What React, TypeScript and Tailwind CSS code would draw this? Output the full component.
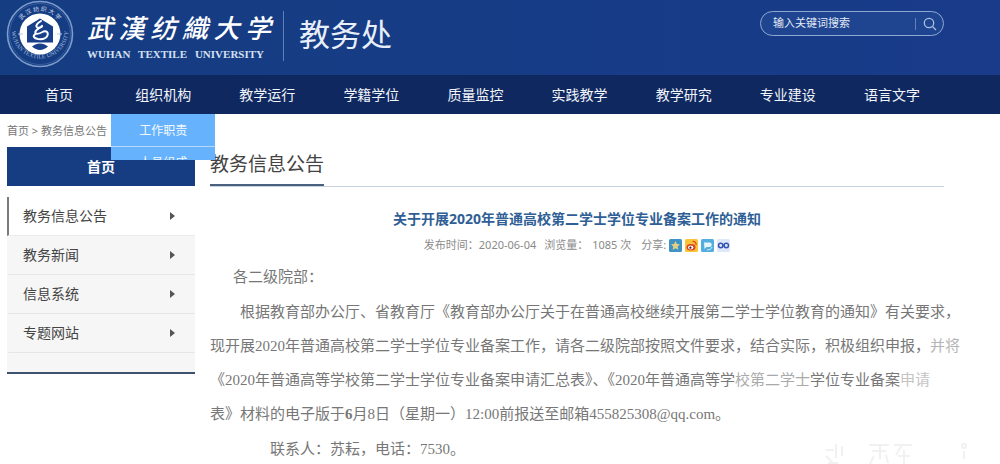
import React from "react";

const navItems = ["首页", "组织机构", "教学运行", "学籍学位", "质量监控", "实践教学", "教学研究", "专业建设", "语言文字"];
const sideItems = ["教务信息公告", "教务新闻", "信息系统", "专题网站"];

function Emblem() {
  return (
    <svg viewBox="0 0 68 68" className="h-[68px] w-[68px] shrink-0" aria-hidden="true">
      <defs>
        <path id="ringTop" d="M11 34a23 23 0 0 1 46 0" />
        <path id="ringBottom" d="M5.500 30a28.500 28.500 0 1 0 57 0" />
      </defs>
      <circle cx="34" cy="34" r="32.500" fill="none" stroke="#7f9dcc" strokeWidth="1.600" />
      <circle cx="34" cy="34" r="30.500" fill="none" stroke="#3d63a6" strokeWidth="0.800" />
      <text fill="#c9d7ee" fontSize="6" fontFamily="'Noto Sans CJK SC', sans-serif" textAnchor="middle">
        <textPath href="#ringTop" startOffset="50%">武 汉 纺 织 大 学</textPath>
      </text>
      <text fill="#9fb7de" fontSize="6" fontFamily="'Liberation Serif', serif" textAnchor="middle">
        <textPath href="#ringBottom" startOffset="50%">WUHAN TEXTILE UNIVERSITY</textPath>
      </text>
      <circle cx="34" cy="34" r="20.500" fill="#fff" />
      <path d="M34 18.500l13 8v16h-26v-16z" fill="#173f8a" />
      <path
        d="M35 21c-3.500 2-5.500 4.200-4.200 6 1.200 1.500 4 .6 5.200-1.200M36 26.500c-4 1.800-7.500 4.500-6.500 6.500 1 1.700 4.500.5 8-1.500 3.500-.8 5 1.200 4 3.800-1.300 3-5.500 4.200-9.500 3.700-4-.6-5.500-2.800-3-4.600"
        fill="none"
        stroke="#fff"
        strokeWidth="2"
        strokeLinecap="round"
      />
      <path d="M26 46.500c5-4 11-4 16 0-5 4.500-11 4.500-16 0z" fill="#173f8a" />
      <path d="M12 34h5M51 34h5" stroke="#b9cbe8" strokeWidth="1" />
    </svg>
  );
}

function ShareIcons() {
  return (
    <div className="flex items-center gap-[3px]">
      <a href="#qzone" aria-label="QQ空间">
        <svg viewBox="0 0 13 13" className="h-[13px] w-[13px]">
          <rect width="13" height="13" rx="1.500" fill="#3f93c4" />
          <path d="M6.500 2l1.400 2.900 3.100.4-2.300 2.200.6 3.200-2.800-1.500-2.800 1.500.6-3.200L2 5.300l3.100-.4z" fill="#e5cf83" />
        </svg>
      </a>
      <a href="#weibo" aria-label="新浪微博">
        <svg viewBox="0 0 13 13" className="h-[13px] w-[13px]">
          <rect width="13" height="13" rx="1.500" fill="#fbc437" />
          <ellipse cx="6" cy="8.200" rx="4.500" ry="3.300" fill="#d8402a" />
          <ellipse cx="5.700" cy="8.500" rx="2.700" ry="1.900" fill="#fff" />
          <circle cx="5.400" cy="8.700" r="1.100" fill="#40200c" />
          <path d="M7.500 2.500c2.500-.3 4 1.500 3.500 3.700" fill="none" stroke="#d8402a" strokeWidth="1.200" />
        </svg>
      </a>
      <a href="#tqq" aria-label="腾讯微博">
        <svg viewBox="0 0 13 13" className="h-[13px] w-[13px]">
          <rect width="13" height="13" rx="1.500" fill="#53aee0" />
          <path d="M3 3.500h5.500a2 2 0 0 1 0 4.500H5.500L3.500 10z" fill="#e6f4fc" />
          <path d="M6 11c2.500 0 4.500-1 5-3" stroke="#d5ecf8" fill="none" />
        </svg>
      </a>
      <a href="#baidu" aria-label="百度">
        <svg viewBox="0 0 13 13" className="h-[13px] w-[13px]">
          <rect width="13" height="13" rx="1.500" fill="#dfe8fa" />
          <circle cx="3.700" cy="6.500" r="2.200" fill="none" stroke="#3554b4" strokeWidth="1.500" />
          <circle cx="9.300" cy="6.500" r="2.200" fill="none" stroke="#3554b4" strokeWidth="1.500" />
          <path d="M5 6.500h3" stroke="#3554b4" strokeWidth="1.500" />
        </svg>
      </a>
    </div>
  );
}

function Header() {
  return (
    <header>
      <div className="flex h-[75px] items-start justify-between bg-linear-to-r from-[#153d82] to-[#193b8a] pl-[6px] pr-14">
        <div className="flex items-start">
          <Emblem />
          <div className="ml-[13px] mt-3 w-[184px] text-white">
            <p className="text-[26px] font-medium italic leading-8 [text-align-last:justify]">武漢纺織大学</p>
            <p className="mt-1 w-[177px] font-['Liberation_Serif',serif] text-[11px] font-bold leading-3 whitespace-nowrap text-[#d5e0f2] [text-align-last:justify]">
              WUHAN TEXTILE UNIVERSITY
            </p>
          </div>
          <div className="ml-3 mt-[11px] h-[50px] w-px bg-[#5f80b8]"></div>
          <p className="ml-[15px] mt-[14px] text-[31px] leading-10 text-[#e9effa]">教务处</p>
        </div>
        <form className="mt-[11px] flex h-[25px] w-[184px] items-center rounded-full border border-[#8fa8d4] bg-[#1f4590] pl-3 pr-[6px]">
          <input
            type="text"
            aria-label="站内搜索"
            placeholder="输入关键词搜索"
            className="min-w-0 flex-1 bg-transparent text-[11px] text-white outline-none placeholder:text-[#e3eaf6]"
          />
          <span className="h-3 w-px bg-[#6483bd]"></span>
          <button type="button" aria-label="搜索" className="ml-[7px]">
            <svg viewBox="0 0 14 14" className="h-[14px] w-[14px]" fill="none" stroke="#a9bfe2" strokeWidth="1.300">
              <circle cx="6" cy="6" r="4.700" />
              <path d="M9.500 9.500l3.500 3.500" />
            </svg>
          </button>
        </form>
      </div>
      <nav className="h-[39px] bg-[#0f2860] pl-[7px] pr-14">
        <ul className="grid grid-cols-9 text-center text-sm leading-[40px] text-[#f2f5fa]">
          {navItems.map((item) => (
            <li key={item} className="relative h-[39px]">
              <a href="#nav" className="block">{item}</a>
              {item === "组织机构" && (
                // submenu caught part way through its slide-down
                <div className="absolute left-0 top-full z-10 h-[46px] w-full overflow-hidden bg-[#66b2fc] text-xs text-[#f3f9ff]">
                  <a href="#duty" className="block h-[33px] border-b border-[#b5dafd] leading-[34px]">工作职责</a>
                  <a href="#staff" className="block leading-[32px]">人员组成</a>
                </div>
              )}
            </li>
          ))}
        </ul>
      </nav>
    </header>
  );
}

function Sidebar() {
  return (
    <aside className="w-[188px] shrink-0">
      <h2 className="bg-[#163c82] text-center text-sm font-bold leading-[39px] text-white">首页</h2>
      <ul className="mt-[11px] border-b-2 border-[#3d5270] bg-[#f6f6f6] pb-[19px] text-sm text-[#444]">
        {sideItems.map((item, i) => (
          <li key={item} className={i === 0 ? "border-b border-l-2 border-b-[#ececec] border-l-[#7b7b7b] bg-white" : "border-b border-l-2 border-b-[#e6e6e6] border-l-transparent"}>
            <a href="#side" className="flex h-[38px] items-center justify-between pl-[14px] pr-5">
              {item}
              <svg viewBox="0 0 5 8" className="h-2 w-[5px]" fill="#555">
                <path d="M0 0l5 4-5 4z" />
              </svg>
            </a>
          </li>
        ))}
      </ul>
    </aside>
  );
}

function Article() {
  return (
    <main className="min-w-0 flex-1">
      <div className="border-b border-[#c9d3e0]">
        <h2 className="inline-block h-[39px] border-b-2 border-[#49607f] text-[19px] leading-[34px] text-[#444] align-top">教务信息公告</h2>
      </div>
      <h1 className="mt-[22px] text-center text-sm font-bold leading-5 text-[#2f5f96]">
        关于开展2020年普通高校第二学士学位专业备案工作的通知
      </h1>
      <div className="mt-2 flex items-center justify-center text-[11px] leading-4 text-[#8a8a8a]">
        <span>发布时间：2020-06-04</span>
        <span className="ml-2">浏览量：</span>
        <span className="ml-1">1085 次</span>
        <span className="ml-[10px] mr-[3px]">分享:</span>
        <ShareIcons />
      </div>
      <div className="mt-[7px] flex flex-col gap-px font-['Liberation_Serif','Noto_Sans_CJK_SC',serif] text-[15px] leading-[34px] whitespace-nowrap text-[#777]">
        <p className="pl-[23px]">各二级院部：</p>
        <p className="indent-[30px]">
          根据教育部办公厅、省教育厅《教育部办公厅关于在普通高校继续开展第二学士学位教育的通知》有关要求，
          <br />
          现开展2020年普通高校第二学士学位专业备案工作，请各二级院部按照文件要求，结合实际，积极组织申报，<span className="text-[#b5b5b5]">并将</span>
          <br />
          《2020年普通高等学校第二学士学位专业备案申请汇总表》、《2020年普通高等学<span className="text-[#aaa]">校第二学士</span>学位专业备案<span className="text-[#c4c4c4]">申请</span>
          <br />
          表》材料的电子版于<b>6</b>月8日（星期一）12:00前报送至邮箱455825308@qq.com。
        </p>
        <p className="pl-[60px]">联系人：苏耘，电话：7530。</p>
      </div>
    </main>
  );
}

function Watermark() {
  return (
    <svg viewBox="0 0 150 26" className="pointer-events-none absolute bottom-0 right-7 h-[26px] w-[150px]" fill="none" stroke="#f1f1f1" strokeWidth="2" aria-hidden="true">
      <path d="M4 10h8M4 16l6 6M14 4v14M20 6v10M6 23h10" />
      <path d="M47 5h20M50 11h14M58 5v14M52 16l-4 8M64 15l2 8M72 5h18M80 5l-6 10M82 10v14M76 16h12" />
      <circle cx="142" cy="6" r="2" />
      <path d="M142 11v8" />
    </svg>
  );
}

export default function App() {
  return (
    <div className="relative overflow-hidden bg-white font-['Noto_Sans','Noto_Sans_CJK_SC',sans-serif]">
      <Header />
      <div className="pl-[7px] pr-14">
        <p className="h-[33px] text-[11px] leading-[34px] text-[#777]">
          <a href="#home">首页</a> &gt; <a href="#notice">教务信息公告</a>
        </p>
        <div className="flex items-start gap-[15px]">
          <Sidebar />
          <Article />
        </div>
      </div>
      <Watermark />
    </div>
  );
}
